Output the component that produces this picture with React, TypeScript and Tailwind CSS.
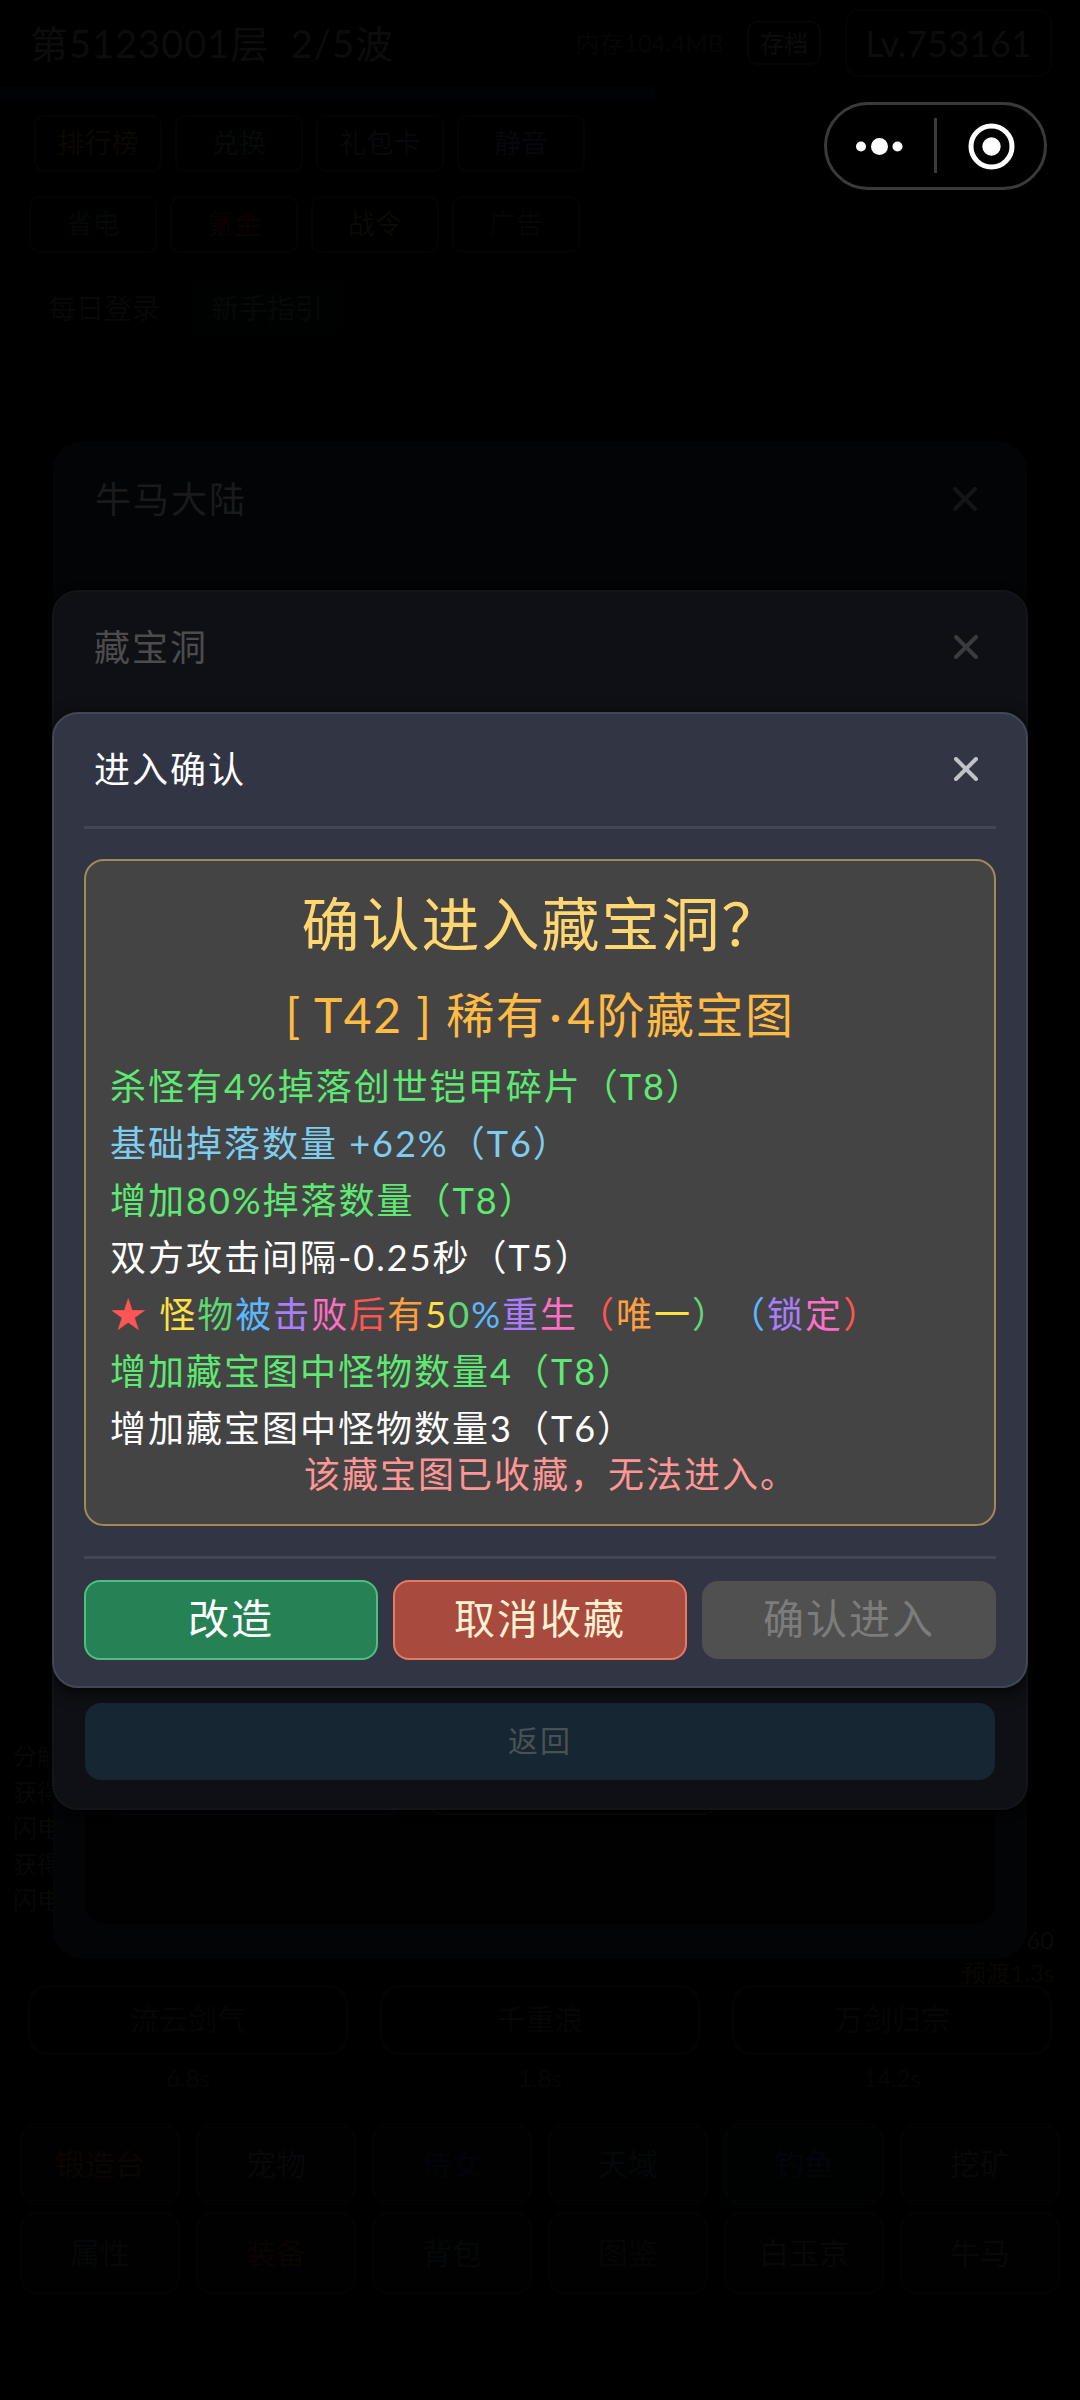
import React from 'react';

const RAINBOW = [
  'text-[#ff5555]',
  'text-[#ff9f40]',
  'text-[#ffe045]',
  'text-[#5fd873]',
  'text-[#5bb8ff]',
  'text-[#aa7dff]',
  'text-[#ff6ec7]',
];

const AFFIXES = [
  { text: '杀怪有4%掉落创世铠甲碎片（T8）', color: 'text-[#5eea72]' },
  { text: '基础掉落数量 +62%（T6）', color: 'text-[#7fcdee]' },
  { text: '增加80%掉落数量（T8）', color: 'text-[#5eea72]' },
  { text: '双方攻击间隔-0.25秒（T5）', color: 'text-white' },
  { text: '★ 怪物被击败后有50%重生（唯一）（锁定）', color: 'rainbow' },
  { text: '增加藏宝图中怪物数量4（T8）', color: 'text-[#5eea72]' },
  { text: '增加藏宝图中怪物数量3（T6）', color: 'text-white' },
];

const MENU = [
  [
    { label: '排行榜', color: 'text-[#0c0802]' },
    { label: '兑换', color: 'text-[#050b09]' },
    { label: '礼包卡', color: 'text-[#07080b]' },
    { label: '静音', color: 'text-[#07080b]' },
  ],
  [
    { label: '省电', color: 'text-[#030808]' },
    { label: '氪金', color: 'text-[#0d0202]' },
    { label: '战令', color: 'text-[#0c0a06]' },
    { label: '广告', color: 'text-[#050606]' },
  ],
];

const SKILLS = [
  { name: '流云剑气', cd: '6.8s' },
  { name: '千重浪', cd: '1.8s' },
  { name: '万剑归宗', cd: '14.2s' },
];

const NAV = [
  { label: '锻造台', color: 'text-[#0b0602]' },
  { label: '宠物', color: 'text-[#07080a]' },
  { label: '侍女', color: 'text-[#03040a]' },
  { label: '天域', color: 'text-[#040809]' },
  { label: '钓鱼', color: 'text-[#04040d]' },
  { label: '挖矿', color: 'text-[#080808]' },
  { label: '属性', color: 'text-[#060708]' },
  { label: '装备', color: 'text-[#0a0502]' },
  { label: '背包', color: 'text-[#040809]' },
  { label: '图鉴', color: 'text-[#060606]' },
  { label: '白玉京', color: 'text-[#07080a]' },
  { label: '牛马', color: 'text-[#080808]' },
];

const LOGS = ['分解', '获得', '闪电', '获得', '闪电'];

const App: React.FC = () => {
  return (
    <div className="relative w-[1080px] h-[2400px] bg-black overflow-hidden font-['Lato','Noto_Sans_CJK_SC',sans-serif]">
      <GameScreen />

      {/* Continent dialog */}
      <Layer>
        <div className="w-[974px] h-[1516px] rounded-[28px] bg-[#030406] border-2 border-[#040507] flex flex-col">
          <DialogHeader title="牛马大陆" titleColor="text-[#1a1a1b]" closeColor="text-[#141516]" lineColor="bg-[#030406]" />
          <div className="mx-[30px] mt-[31px] mb-8 flex-1 rounded-[20px] bg-[#010102] px-7 flex items-end gap-7 pb-[109px]">
            <div className="w-[288px] h-20 rounded-[14px] border-2 border-[#050b0b]" />
            <div className="w-[288px] h-20 rounded-[14px] border-2 border-[#0c0a06]" />
          </div>
        </div>
      </Layer>

      {/* Treasure cave dialog */}
      <Layer>
        <div className="w-[976px] h-[1220px] rounded-[26px] bg-[#0f1015] border-2 border-[#131418] shadow-[0_2px_10px_#000] flex flex-col justify-between">
          <DialogHeader title="藏宝洞" titleColor="text-[#4c4c4e]" closeColor="text-[#3a3b3d]" lineColor="bg-[#111217]" />
          <button className="mx-[31px] mb-[28px] h-[77px] rounded-[16px] bg-[#162733] text-[#4b5052] text-[30px] leading-[75px] pb-[2px] tracking-[2px]">
            返回
          </button>
        </div>
      </Layer>

      {/* Confirm dialog */}
      <Layer>
        <div className="w-[976px] h-[976px] rounded-[26px] bg-[#323644] border-2 border-[#434755] shadow-[0_4px_16px_rgba(0,0,0,0.75)] flex flex-col">
          <DialogHeader title="进入确认" titleColor="text-white" closeColor="text-[#c0c2c6]" lineColor="bg-[#434654]" />
          <div className="mx-[30px] mt-[30px] h-[667px] shrink-0 rounded-[20px] border-2 border-[#a08a55] bg-[#444444] px-6 flex flex-col">
            <h2 className="mt-[25px] pl-[3px] h-[76px] leading-[76px] text-center text-[58px] tracking-[2px] text-[#ffd670] whitespace-nowrap">
              确认进入藏宝洞？
            </h2>
            <p className="mt-[23px] h-[60px] leading-[60px] text-center text-[48px] tracking-[1.5px] text-[#ffbb44] whitespace-nowrap">
              [ T42 ] 稀有<span className="mx-[4px]">·</span>4阶藏宝图
            </p>
            <div className="mt-[13px]">
              {AFFIXES.map((a) => (
                <AffixLine key={a.text} text={a.text} color={a.color} />
              ))}
            </div>
            <p className="-mt-[7px] pl-[22px] h-[48px] leading-[48px] text-center text-[36px] tracking-[2px] text-[#ff9696] whitespace-nowrap">
              该藏宝图已收藏，无法进入。
            </p>
          </div>
          <div className="mx-[30px] mt-[30px] h-[3px] shrink-0 bg-[#434654]" />
          <div className="mx-[30px] mt-[21px] grid grid-cols-3 gap-[15px] h-20 text-[41px] leading-[72px] tracking-[2px]">
            <button className="rounded-[16px] border-2 border-[#4cc082] bg-[#268255] pb-[2px] text-white">改造</button>
            <button className="rounded-[16px] border-2 border-[#e67a66] bg-[#a84a3e] pb-[2px] text-[#fff0d2]">取消收藏</button>
            <button className="rounded-[16px] my-px bg-[#505050] pb-[2px] text-[#7c7c7c]" disabled>确认进入</button>
          </div>
        </div>
      </Layer>

      <Capsule />
    </div>
  );
};

const Layer: React.FC<{ children: React.ReactNode }> = ({ children }) => (
  <div className="absolute inset-0 flex items-center justify-center">{children}</div>
);

const DialogHeader: React.FC<{ title: string; titleColor: string; closeColor: string; lineColor: string }> = ({
  title,
  titleColor,
  closeColor,
  lineColor,
}) => (
  <div className="mx-[30px] shrink-0">
    <div className="h-[112px] pl-[10px] pr-[18px] pb-[2px] flex items-center justify-between">
      <span className={`text-[36px] tracking-[2px] ${titleColor}`}>{title}</span>
      <svg className={`w-6 h-6 ${closeColor}`} viewBox="0 0 24 24" fill="none" stroke="currentColor" strokeWidth="4" strokeLinecap="round">
        <path d="M2 2 L22 22 M22 2 L2 22" />
      </svg>
    </div>
    <div className={`h-[3px] ${lineColor}`} />
  </div>
);

const AffixLine: React.FC<{ text: string; color: string }> = ({ text, color }) => {
  if (color !== 'rainbow') {
    return <p className={`h-[57px] leading-[57px] text-[36px] tracking-[2px] whitespace-pre ${color}`}>{text}</p>;
  }
  const chars = Array.from(text);
  return (
    <p className="h-[57px] leading-[57px] text-[36px] tracking-[2px] whitespace-pre">
      {chars.map((ch, i) => (
        <span key={i} className={`${RAINBOW[i % RAINBOW.length]} ${ch === '（' && chars[i - 1] === '）' ? 'ml-[17px]' : ''}`}>
          {ch}
        </span>
      ))}
    </p>
  );
};

// Mini program capsule in the top right corner
const Capsule: React.FC = () => (
  <div className="absolute left-[824px] top-[102px] w-[223px] h-[88px] rounded-full border-[3px] border-[#3a3a3a] bg-black flex items-center">
    <svg className="w-full h-full" viewBox="0 0 217 82">
      <circle cx="34" cy="41.5" r="5" fill="#fff" />
      <circle cx="52.5" cy="41.5" r="8.5" fill="#fff" />
      <circle cx="70.5" cy="41.5" r="5" fill="#fff" />
      <rect x="107" y="13" width="3" height="55" fill="#3a3a3a" />
      <circle cx="164.5" cy="41.5" r="20.5" fill="none" stroke="#fff" strokeWidth="5" />
      <circle cx="164.5" cy="41.5" r="9.2" fill="#fff" />
    </svg>
  </div>
);

// The game behind the dialogs, almost blacked out by the masks
const GameScreen: React.FC = () => (
  <div className="h-full flex flex-col">
    <div className="h-[86px] pl-[30px] pr-7 flex items-center text-[#0c0c0c]">
      <span className="text-[38px] tracking-[1px] whitespace-pre">第5123001层  2/5波</span>
      <span className="ml-auto text-[24px] text-[#060606]">内存104.4MB</span>
      <span className="ml-6 w-[74px] h-[44px] rounded-[10px] border-2 border-[#060606] flex items-center justify-center text-[24px]">存档</span>
      <span className="ml-6 w-[207px] h-[68px] rounded-[14px] border-2 border-[#040404] flex items-center justify-center text-[36px]">Lv.753161</span>
    </div>
    <div className="h-4 w-[655px] bg-[#000204]" />
    <div className="mt-[13px] px-[34px] flex gap-[13px]">
      {MENU[0].map((m) => (
        <MenuButton key={m.label} label={m.label} color={m.color} />
      ))}
    </div>
    <div className="mt-6 px-[29px] flex gap-[13px]">
      {MENU[1].map((m) => (
        <MenuButton key={m.label} label={m.label} color={m.color} />
      ))}
    </div>
    <div className="mt-[28px] px-[34px] flex gap-4 text-[28px] text-[#070808]">
      <div className="w-[140px] h-[54px] flex items-center justify-center">每日登录</div>
      <div className="w-[154px] h-[54px] rounded-[10px] bg-[#000202] flex items-center justify-center">新手指引</div>
    </div>

    <div className="mt-auto pl-[13px] text-[24px] leading-9 text-[#080808]">
      {LOGS.map((l, i) => (
        <p key={i}>{l}</p>
      ))}
    </div>
    <div className="mt-[5px] -mb-1 pr-[26px] text-right text-[24px] leading-[33px] text-[#090909]">
      <p>60</p>
      <p className="text-[#0a0702]">预渡1.3s</p>
    </div>
    <div className="px-7 flex gap-8">
      {SKILLS.map((s) => (
        <div key={s.name} className="flex-1 text-center text-[#060606]">
          <div className="h-[70px] rounded-[20px] border-2 border-[#040404] flex items-center justify-center text-[29px]">{s.name}</div>
          <p className="mt-1 text-[24px] leading-[38px]">{s.cd}</p>
        </div>
      ))}
    </div>
    <div className="mt-[26px] mb-[106px] px-5 grid grid-cols-6 gap-x-4 gap-y-[7px]">
      {NAV.map((n) => (
        <div key={n.label} className={`h-[82px] rounded-[18px] border-2 border-[#030404] flex items-center justify-center pb-[2px] text-[30px] ${n.label === '钓鱼' ? 'bg-[#000202]' : 'bg-[#010101]'} ${n.color}`}>
          {n.label}
        </div>
      ))}
    </div>
  </div>
);

const MenuButton: React.FC<{ label: string; color: string }> = ({ label, color }) => (
  <div className={`w-[128px] h-[57px] rounded-[10px] border-2 border-[#030404] flex items-center justify-center text-[27px] ${color}`}>
    {label}
  </div>
);

export default App;
